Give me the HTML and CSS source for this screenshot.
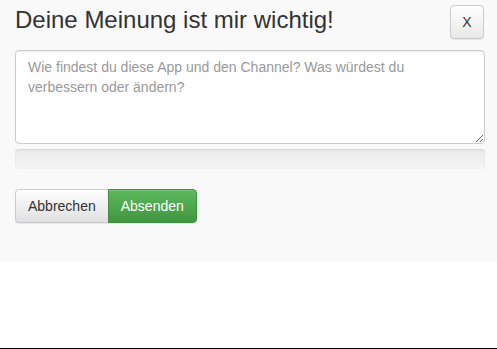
FILE: index.html
```html
<!DOCTYPE html>
<html lang="de">
<head>
    <meta charset="UTF-8">
    <meta name="viewport" content="width=device-width, initial-scale=1.0">
    <title>Feedback</title>
    <link rel="stylesheet" href="styles.css">
</head>
<body>
    <div class="feedback">
        <div class="header">
            <h1>Deine Meinung ist mir wichtig!</h1>
            <button class="close" type="button">X</button>
        </div>
        <textarea placeholder="Wie findest du diese App und den Channel? Was würdest du verbessern oder ändern?"></textarea>
        <div class="progress"></div>
        <div class="actions">
            <button class="btn btn-default" type="button">Abbrechen</button>
            <button class="btn btn-success" type="button">Absenden</button>
        </div>
    </div>
    <div class="spacer"></div>
    <div class="bottom-line"></div>
</body>
</html>
```

FILE: styles.css
```css
body {
    font-family: "Liberation Sans", Arial, sans-serif;
    font-size: 14px;
    color: #333;
    margin: 0;
    padding: 0;
    height: 100vh;
    display: flex;
    flex-direction: column;
    background-color: #fff;
}

.feedback {
    background-color: #f9f9f9;
    padding: 5px 12px 40px 15px;
    height: 262px;
    box-sizing: border-box;
}

.header {
    display: flex;
    justify-content: space-between;
    align-items: flex-start;
    height: 45px;
}

h1 {
    font-size: 24px;
    font-weight: normal;
    line-height: 26px;
    margin: 2px 0 0 0;
    color: #333;
}

.close {
    width: 34px;
    height: 34px;
    margin-right: 1px;
    font-family: "Liberation Sans", Arial, sans-serif;
    font-size: 14px;
    color: #333;
    background-image: linear-gradient(to bottom, #fff 0, #e8e8e8 100%);
    border: 1px solid #ccc;
    border-radius: 4px;
    box-shadow: inset 0 1px 0 rgba(255, 255, 255, 0.15), 0 1px 1px rgba(0, 0, 0, 0.075);
    padding: 0;
}

textarea {
    display: block;
    width: 470px;
    height: 94px;
    box-sizing: border-box;
    padding: 6px 12px;
    font-family: "Liberation Sans", Arial, sans-serif;
    font-size: 14px;
    line-height: 20px;
    color: #555;
    background-color: #fff;
    border: 1px solid #ccc;
    border-radius: 4px;
    box-shadow: inset 0 1px 1px rgba(0, 0, 0, 0.075);
    margin: 0;
}

textarea::placeholder {
    color: #999;
}

.progress {
    width: 470px;
    height: 20px;
    margin-top: 5px;
    border-radius: 4px;
    background-image: linear-gradient(to bottom, #ebebeb 0, #f5f5f5 100%);
    box-shadow: inset 0 1px 2px rgba(0, 0, 0, 0.1);
}

.actions {
    display: flex;
    margin-top: 20px;
}

.btn {
    height: 34px;
    padding: 6px 12px;
    font-family: "Liberation Sans", Arial, sans-serif;
    font-size: 14px;
    line-height: 20px;
    border: 1px solid transparent;
    box-shadow: inset 0 1px 0 rgba(255, 255, 255, 0.15), 0 1px 1px rgba(0, 0, 0, 0.075);
}

.btn-default {
    color: #333;
    background-image: linear-gradient(to bottom, #fff 0, #e0e0e0 100%);
    border-color: #ccc;
    border-radius: 4px 0 0 4px;
}

.btn-success {
    color: #fff;
    background-image: linear-gradient(to bottom, #5cb85c 0, #419641 100%);
    border-color: #3e8f3e;
    border-radius: 0 4px 4px 0;
    margin-left: -1px;
    width: 89px;
}

.spacer {
    flex: 1;
}

.bottom-line {
    height: 1px;
    background-color: #000;
}
```
